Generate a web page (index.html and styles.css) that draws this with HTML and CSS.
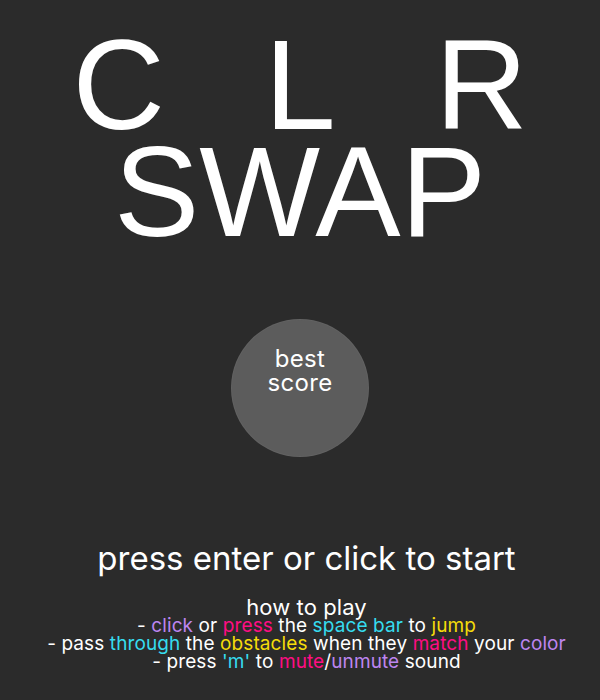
FILE: index.html
```html
<!DOCTYPE html>
<html>
<head>
<meta charset="utf-8">
<link rel="stylesheet" href="styles.css">
</head>
<body>
<main class="screen">
  <h1 class="title">
    <span class="row">C<span class="ghost">O</span>L<span class="ghost">O</span>R</span>
    <span class="row">SWAP</span>
  </h1>
  <div class="best">
    <div class="best-label">best<br>score</div>
  </div>
  <p class="start">press enter or click to start</p>
  <div class="howto">
    <div class="howto-head">how to play</div>
    <div>- <span class="purple">click</span> or <span class="pink">press</span> the <span class="cyan">space bar</span> to <span class="yellow">jump</span></div>
    <div>- pass <span class="cyan">through</span> the <span class="yellow">obstacles</span> when they <span class="pink">match</span> your <span class="purple">color</span></div>
    <div>- press <span class="cyan">'m'</span> to <span class="pink">mute</span>/<span class="purple">unmute</span> sound</div>
  </div>
</main>
</body>
</html>
```
FILE: styles.css
```css
html, body {
  margin: 0;
  padding: 0;
  background: #2b2b2b;
  color: #ffffff;
}
.screen {
  width: 600px;
  height: 700px;
  display: flex;
  flex-direction: column;
  align-items: center;
  font-family: Inter, "Noto Sans", sans-serif;
}
.title {
  margin: 31px 0 0 0;
  font-family: "Liberation Sans", Arial, sans-serif;
  font-weight: normal;
  font-size: 128px;
  line-height: 107px;
  text-align: center;
  display: flex;
  flex-direction: column;
}
.ghost {
  color: transparent;
}
.best {
  margin-top: 75px;
  width: 136px;
  height: 136px;
  border-radius: 50%;
  background: #5c5c5c;
  box-shadow: 0 0 0 1px #626262;
  display: flex;
  justify-content: center;
}
.best-label {
  margin-top: 27px;
  font-size: 24px;
  line-height: 24px;
  letter-spacing: 0.3px;
  text-align: center;
}
.start {
  margin: 82px 0 0 0;
  padding-left: 13px;
  font-size: 33px;
  line-height: 40px;
}
.howto {
  margin-top: 19px;
  padding-left: 13px;
  font-size: 19px;
  line-height: 18px;
  letter-spacing: 0.1px;
  text-align: center;
}
.howto-head {
  font-size: 22px;
  line-height: 20px;
}
.purple { color: #bd85f0; }
.pink { color: #ff0d83; }
.cyan { color: #36dcef; }
.yellow { color: #f5dc0a; }
```
